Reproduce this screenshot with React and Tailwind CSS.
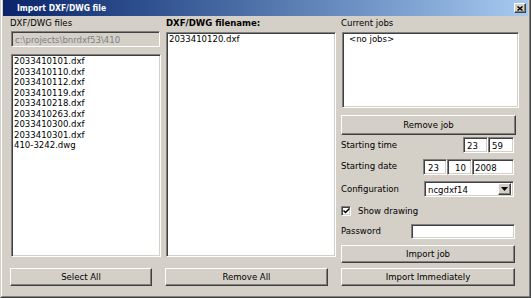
import React from 'react'

const sunken =
  'border border-t-[#808080] border-l-[#808080] border-r-white border-b-white shadow-[inset_1px_1px_0_#404040,inset_-1px_-1px_0_#d4d0c8]'
const raised =
  'border border-t-white border-l-white border-r-[#404040] border-b-[#404040] shadow-[inset_-1px_-1px_0_#808080]'

const files = [
  '2033410101.dxf',
  '2033410110.dxf',
  '2033410112.dxf',
  '2033410119.dxf',
  '2033410218.dxf',
  '2033410263.dxf',
  '2033410300.dxf',
  '2033410301.dxf',
  '410-3242.dwg',
]

function Button({ className = '', children }) {
  return (
    <div className={`${raised} flex items-center justify-center bg-[#d4d0c8] text-black ${className}`}>
      {children}
    </div>
  )
}

function Field({ className = '', children }) {
  return (
    <div className={`${sunken} flex items-center bg-white pt-px ${className}`}>{children}</div>
  )
}

export default function App() {
  return (
    <div className="w-[531px] h-[298px] bg-[#d4d0c8] border-l border-r border-b border-l-[#d4d0c8] border-r-[#404040] border-b-[#404040] font-['DejaVu_Sans','Liberation_Sans',sans-serif] font-stretch-condensed text-[9.5px] text-black leading-[12px]">
      <div className="h-full border-l border-r border-b border-l-white border-r-[#808080] border-b-[#808080] px-px pb-px">
        {/* title bar */}
        <div className="h-[16px] flex items-center justify-between bg-linear-to-r from-[#0a246a] to-[#a6caf0]">
          <span className="pl-[14px] text-[8.5px] font-bold text-white">Import DXF/DWG file</span>
          <div className={`${raised} mr-[2px] w-[12px] h-[10px] flex items-center justify-center bg-[#d4d0c8]`}>
            <svg width="6" height="5" viewBox="0 0 6 5">
              <path d="M0.5 0.5 L5.5 4.5 M5.5 0.5 L0.5 4.5" stroke="#000" strokeWidth="1.4" />
            </svg>
          </div>
        </div>

        <div className="flex pl-[7px]">
          {/* left column */}
          <div className="w-[151px] flex flex-col">
            <div className="mt-px h-[12px]">DXF/DWG files</div>
            <Field className="mt-[2px] ml-px w-[149px] h-[16px] !bg-[#d4d0c8] pl-[3px] text-[#808080]">
              c:\projects\bnrdxf53\410
            </Field>
            <div className={`${sunken} mt-[7px] ml-px w-[150px] h-[203px] bg-white pl-[2px] pt-[1px] leading-[10.5px]`}>
              {files.map((f) => (
                <div key={f}>{f}</div>
              ))}
            </div>
            <Button className="mt-[11px] w-[142px] h-[18px]">Select All</Button>
          </div>

          {/* middle column */}
          <div className="ml-[4px] w-[171px] flex flex-col">
            <div className="mt-px h-[12px] pl-px font-bold">DXF/DWG filename:</div>
            <div className={`${sunken} mt-[3px] ml-px w-[170px] h-[225px] bg-white pl-[2px] pt-[1px] leading-[10.5px]`}>
              2033410120.dxf
            </div>
            <Button className="mt-[11px] w-[163px] h-[18px]">Remove All</Button>
          </div>

          {/* right column */}
          <div className="ml-[5px] w-[178px] flex flex-col">
            <div className="mt-px h-[12px]">Current jobs</div>
            <div className={`${sunken} mt-[3px] ml-px w-[177px] h-[76px] bg-white pl-[6px] pt-[1px] leading-[10.5px]`}>
              &lt;no jobs&gt;
            </div>
            <Button className="mt-[7px] w-[175px] h-[20px]">Remove job</Button>

            <div className="mt-[2px] h-[16px] flex items-center">
              <span className="w-[122px]">Starting time</span>
              <Field className="w-[25px] h-full pl-[3px]">23</Field>
              <Field className="w-[26px] h-full pl-[3px]">59</Field>
            </div>

            <div className="mt-[6px] h-[16px] flex items-center">
              <span className="w-[82px] -mt-[2px]">Starting date</span>
              <Field className="w-[24px] h-full pl-[4px]">23</Field>
              <Field className="w-[25px] h-full pl-[7px]">10</Field>
              <Field className="w-[42px] h-full pl-[2px]">2008</Field>
            </div>

            <div className="mt-[6px] h-[16px] flex items-center">
              <span className="w-[83px]">Configuration</span>
              <div className={`${sunken} w-[90px] h-full bg-white flex items-center pl-[3px] pr-[2px]`}>
                <span className="flex-1 pt-px">ncgdxf14</span>
                <div className={`${raised} w-[13px] h-[12px] bg-[#d4d0c8] flex items-center justify-center`}>
                  <svg width="7" height="5" viewBox="0 0 7 5">
                    <path d="M0 0 H7 L3.5 4 Z" fill="#000" />
                  </svg>
                </div>
              </div>
            </div>

            <div className="mt-[8px] h-[12px] flex items-center">
              <div className={`${sunken} w-[10px] h-[10px] bg-white flex items-center justify-center`}>
                <svg width="7" height="6" viewBox="0 0 7 6">
                  <path d="M0.5 2.5 L2.5 4.5 L6.5 0.5" stroke="#000" strokeWidth="1.5" fill="none" />
                </svg>
              </div>
              <span className="ml-[7px]">Show drawing</span>
            </div>

            <div className="mt-[7px] h-[15px] flex items-center">
              <span className="w-[70px] -mt-[1px]">Password</span>
              <Field className="w-[104px] h-full" />
            </div>

            <Button className="mt-[6px] w-[174px] h-[18px]">Import job</Button>
            <Button className="mt-[5px] w-[174px] h-[18px]">Import Immediately</Button>
          </div>
        </div>
      </div>
    </div>
  )
}
